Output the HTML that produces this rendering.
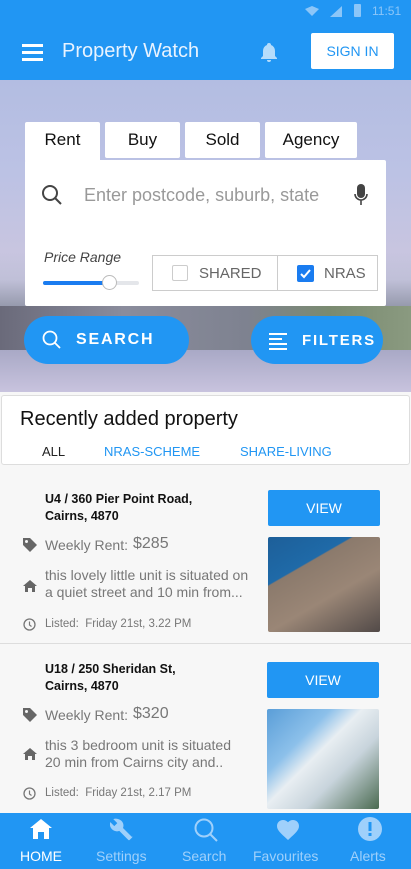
<!DOCTYPE html>
<html><head><meta charset="utf-8"><style>
*{margin:0;padding:0;box-sizing:border-box}
body{width:411px;height:869px;overflow:hidden;font-family:"Liberation Sans",sans-serif;background:#f7f7f7;position:relative}
.abs{position:absolute}
.top{left:0;top:0;width:411px;height:80px;background:#2196f3}
.hero{left:0;top:80px;width:411px;height:312px;background:linear-gradient(180deg,#b3bde2 0%,#bcc2e4 30%,#c8c5e0 55%,#c0c0d8 64%,#8a8fa0 75%,#a7a9c4 88%,#c3c3dc 100%)}
.tab{top:122px;height:36px;background:#fff;font-size:17px;text-align:center;line-height:36px;color:#111;border-radius:2px}
.sbox{left:25px;top:160px;width:361px;height:146px;background:#fff;border-radius:2px}
.pill{background:#2196f3;color:#fff;font-weight:bold;letter-spacing:1.5px;font-size:16px;border-radius:24px}
.card{left:1px;top:395px;width:409px;height:70px;background:#fff;border:1px solid #ddd;border-radius:3px}
.addr{font-size:13px;font-weight:bold;color:#111;line-height:17px}
.g{color:#777}
.view{background:#2196f3;color:#fff;font-size:14px;text-align:center;line-height:36px;border-radius:2px;width:112px;height:36px}
.nav{left:0;top:813px;width:411px;height:56px;background:#2196f3}
.ni{top:848px;font-size:14px;color:#9fd0fb;text-align:center}
</style></head><body>
<div class="abs top"></div>
<div class="abs" style="left:305px;top:6px;width:14px;height:10px;background:#8cc6f8;clip-path:polygon(0 30%,50% 0,100% 30%,50% 100%)"></div>
<div class="abs" style="left:330px;top:6px;width:12px;height:11px;background:#8cc6f8;clip-path:polygon(100% 0,100% 100%,0 100%)"></div>
<div class="abs" style="left:354px;top:4px;width:7px;height:13px;background:#8cc6f8;border-radius:1px"></div>
<div class="abs" style="left:372px;top:4px;font-size:12px;color:#8cc6f8">11:51</div>
<div class="abs" style="left:22px;top:44px;width:21px;height:3px;background:#fff;box-shadow:0 7px 0 #fff,0 14px 0 #fff"></div>
<div class="abs" style="left:62px;top:40px;font-size:20px;color:#e8f3ff">Property Watch</div>
<svg class="abs" style="left:259px;top:41px" width="20" height="22" viewBox="0 0 20 22"><path d="M10 2a2 2 0 0 1 2 2 6 6 0 0 1 4 6v5l2 2v1H2v-1l2-2v-5a6 6 0 0 1 4-6 2 2 0 0 1 2-2zM8 19h4a2 2 0 0 1-4 0z" fill="#b5dcfb"/></svg>
<div class="abs" style="left:311px;top:33px;width:83px;height:36px;background:#fff;border-radius:2px;color:#2196f3;font-size:14px;text-align:center;line-height:36px">SIGN IN</div>
<div class="abs hero"></div>
<div class="abs" style="left:0;top:306px;width:411px;height:44px;background:linear-gradient(90deg,#6a6a7a,#8a8c9c 30%,#7e8290 60%,#7a8a70 80%,#8a9a80)"></div>
<div class="abs" style="left:0;top:350px;width:411px;height:42px;background:linear-gradient(180deg,#a9a9c6,#c8c3de)"></div>
<div class="abs tab" style="left:25px;width:75px;height:40px">Rent</div>
<div class="abs tab" style="left:105px;width:75px">Buy</div>
<div class="abs tab" style="left:185px;width:75px">Sold</div>
<div class="abs tab" style="left:265px;width:92px">Agency</div>
<div class="abs sbox"></div>
<svg class="abs" style="left:41px;top:184px" width="22" height="22" viewBox="0 0 22 22"><circle cx="9" cy="9" r="7" fill="none" stroke="#444" stroke-width="2"/><path d="M14 14l6 6" stroke="#444" stroke-width="2"/></svg>
<div class="abs" style="left:84px;top:185px;font-size:18px;color:#999">Enter postcode, suburb, state</div>
<svg class="abs" style="left:354px;top:184px" width="14" height="22" viewBox="0 0 14 22"><rect x="3" y="0" width="8" height="14" rx="4" fill="#444"/><path d="M1 10a6 6 0 0 0 12 0M7 16v5" stroke="#444" stroke-width="1.6" fill="none"/></svg>
<div class="abs" style="left:44px;top:249px;font-size:14px;font-style:italic;color:#444">Price Range</div>
<div class="abs" style="left:43px;top:281px;width:96px;height:4px;background:#e4e6ea;border-radius:2px"></div>
<div class="abs" style="left:43px;top:281px;width:66px;height:4px;background:#1a7cf0;border-radius:2px"></div>
<div class="abs" style="left:102px;top:275px;width:15px;height:15px;background:#fff;border:1px solid #bbb;border-radius:50%"></div>
<div class="abs" style="left:152px;top:255px;width:226px;height:36px;border:1px solid #ccc"></div>
<div class="abs" style="left:277px;top:255px;width:1px;height:36px;background:#ccc"></div>
<div class="abs" style="left:172px;top:265px;width:16px;height:16px;border:1.5px solid #ccc;border-radius:2px"></div>
<div class="abs" style="left:199px;top:265px;font-size:15px;color:#666">SHARED</div>
<div class="abs" style="left:297px;top:265px;width:17px;height:17px;background:#1a7cf0;border-radius:2px"></div>
<svg class="abs" style="left:297px;top:265px" width="17" height="17"><path d="M4 9l3 3 6-7" stroke="#fff" stroke-width="2" fill="none"/></svg>
<div class="abs" style="left:324px;top:265px;font-size:15px;color:#666">NRAS</div>
<div class="abs pill" style="left:24px;top:316px;width:165px;height:48px"></div>
<svg class="abs" style="left:42px;top:330px" width="20" height="20"><circle cx="8" cy="8" r="6.5" fill="none" stroke="#fff" stroke-width="1.8"/><path d="M13 13l5 5" stroke="#fff" stroke-width="1.8"/></svg>
<div class="abs" style="left:76px;top:331px;color:#fff;font-weight:bold;font-size:16px;letter-spacing:1.8px">SEARCH</div>
<div class="abs pill" style="left:251px;top:316px;width:132px;height:48px"></div>
<div class="abs" style="left:269px;top:333px;width:18px;height:2px;background:#fff"></div>
<div class="abs" style="left:269px;top:338px;width:13px;height:2px;background:#fff"></div>
<div class="abs" style="left:269px;top:343px;width:18px;height:2px;background:#fff"></div>
<div class="abs" style="left:269px;top:348px;width:18px;height:2px;background:#fff"></div>
<div class="abs" style="left:302px;top:332px;color:#fff;font-weight:bold;font-size:15px;letter-spacing:1.8px">FILTERS</div>
<div class="abs card"></div>
<div class="abs" style="left:20px;top:408px;font-size:20px;color:#111">Recently added property</div>
<div class="abs" style="left:42px;top:444px;font-size:13px;color:#222">ALL</div>
<div class="abs" style="left:104px;top:444px;font-size:13px;color:#2196f3">NRAS-SCHEME</div>
<div class="abs" style="left:240px;top:444px;font-size:13px;color:#2196f3">SHARE-LIVING</div>

<div class="abs addr" style="left:45px;top:491px;font-size:12.5px">U4 / 360 Pier Point Road,<br>Cairns, 4870</div>
<svg class="abs" style="left:22px;top:537px" width="16" height="16" viewBox="0 0 16 16"><path d="M1 1h7l7 7-7 7-7-7z" fill="#666"/><circle cx="4.5" cy="4.5" r="1.5" fill="#f7f7f7"/></svg>
<div class="abs g" style="left:45px;top:537px;font-size:14px">Weekly Rent:</div>
<div class="abs g" style="left:133px;top:535px;font-size:16px">$285</div>
<svg class="abs" style="left:23px;top:580px" width="14" height="12" viewBox="0 0 14 12"><path d="M7 0l7 6h-2v6H9V8H5v4H2V6H0z" fill="#666"/></svg>
<div class="abs g" style="left:45px;top:567px;font-size:14px;line-height:17px">this lovely little unit is situated on<br>a quiet street and 10 min from...</div>
<svg class="abs" style="left:23px;top:618px" width="13" height="13"><circle cx="6.5" cy="6.5" r="5.5" fill="none" stroke="#777" stroke-width="1.3"/><path d="M6.5 3.5v3.5l2 1.5" stroke="#777" stroke-width="1.2" fill="none"/></svg>
<div class="abs g" style="left:45px;top:618px;font-size:11.5px">Listed:&nbsp; Friday 21st, 3.22 PM</div>
<div class="abs view" style="left:268px;top:490px">VIEW</div>
<div class="abs" style="left:268px;top:537px;width:112px;height:95px;background:linear-gradient(150deg,#1d5f99 0%,#1f6aa8 30%,#8b7a6c 31%,#9a8676 60%,#524a48 100%);border-radius:2px"></div>
<div class="abs" style="left:0;top:643px;width:411px;height:1px;background:#ddd"></div>

<div class="abs addr" style="left:45px;top:661px;font-size:12.5px">U18 / 250 Sheridan St,<br>Cairns, 4870</div>
<svg class="abs" style="left:22px;top:707px" width="16" height="16" viewBox="0 0 16 16"><path d="M1 1h7l7 7-7 7-7-7z" fill="#666"/><circle cx="4.5" cy="4.5" r="1.5" fill="#f7f7f7"/></svg>
<div class="abs g" style="left:45px;top:707px;font-size:14px">Weekly Rent:</div>
<div class="abs g" style="left:133px;top:705px;font-size:16px">$320</div>
<svg class="abs" style="left:23px;top:748px" width="14" height="12" viewBox="0 0 14 12"><path d="M7 0l7 6h-2v6H9V8H5v4H2V6H0z" fill="#666"/></svg>
<div class="abs g" style="left:45px;top:737px;font-size:14px;line-height:17px">this 3 bedroom unit is situated<br>20 min from Cairns city and..</div>
<svg class="abs" style="left:23px;top:787px" width="13" height="13"><circle cx="6.5" cy="6.5" r="5.5" fill="none" stroke="#777" stroke-width="1.3"/><path d="M6.5 3.5v3.5l2 1.5" stroke="#777" stroke-width="1.2" fill="none"/></svg>
<div class="abs g" style="left:45px;top:787px;font-size:11.5px">Listed:&nbsp; Friday 21st, 2.17 PM</div>
<div class="abs view" style="left:267px;top:662px">VIEW</div>
<div class="abs" style="left:267px;top:709px;width:112px;height:100px;background:linear-gradient(135deg,#5a9ed8 0%,#8cc0ea 30%,#e8eef2 45%,#c8d4dc 65%,#4a6a50 100%);border-radius:2px"></div>

<div class="abs nav"></div>
<svg class="abs" style="left:29px;top:818px" width="24" height="22" viewBox="0 0 24 22"><path d="M12 1l11 9h-3v11h-5v-7h-6v7H4V10H1z" fill="#fff"/></svg>
<div class="abs ni" style="left:20px;color:#fff">HOME</div>
<svg class="abs" style="left:110px;top:818px" width="24" height="24" viewBox="0 0 24 24"><path d="M22 19l-9-9c1-2.5.4-5.3-1.6-7.3C8.4.7 5.6.2 3.3 1.1l4 4-3 3-4-4C-.6 6.5 0 9.3 2 11.3c2 2 4.8 2.5 7.3 1.6l9 9c.4.4 1 .4 1.4 0l2.3-2.3c.5-.4.5-1 0-1.4z" fill="#9fd0fb"/></svg>
<div class="abs ni" style="left:96px">Settings</div>
<svg class="abs" style="left:193px;top:817px" width="26" height="26"><circle cx="11" cy="11" r="8.5" fill="none" stroke="#9fd0fb" stroke-width="2"/><path d="M17 17l7 7" stroke="#9fd0fb" stroke-width="2"/></svg>
<div class="abs ni" style="left:182px">Search</div>
<svg class="abs" style="left:277px;top:820px" width="22" height="20" viewBox="0 0 22 20"><path d="M11 20l-1.5-1.4C4 13.6 0 10.3 0 6 0 2.6 2.6 0 6 0c2 0 3.8.9 5 2.3C12.2.9 14 0 16 0c3.4 0 6 2.6 6 6 0 4.3-4 7.6-9.5 12.6z" fill="#9fd0fb"/></svg>
<div class="abs ni" style="left:253px">Favourites</div>
<svg class="abs" style="left:358px;top:817px" width="24" height="24"><circle cx="12" cy="12" r="12" fill="#9fd0fb"/><rect x="10.5" y="5" width="3" height="9" fill="#2196f3"/><rect x="10.5" y="16" width="3" height="3" fill="#2196f3"/></svg>
<div class="abs ni" style="left:350px">Alerts</div>
</body></html>
